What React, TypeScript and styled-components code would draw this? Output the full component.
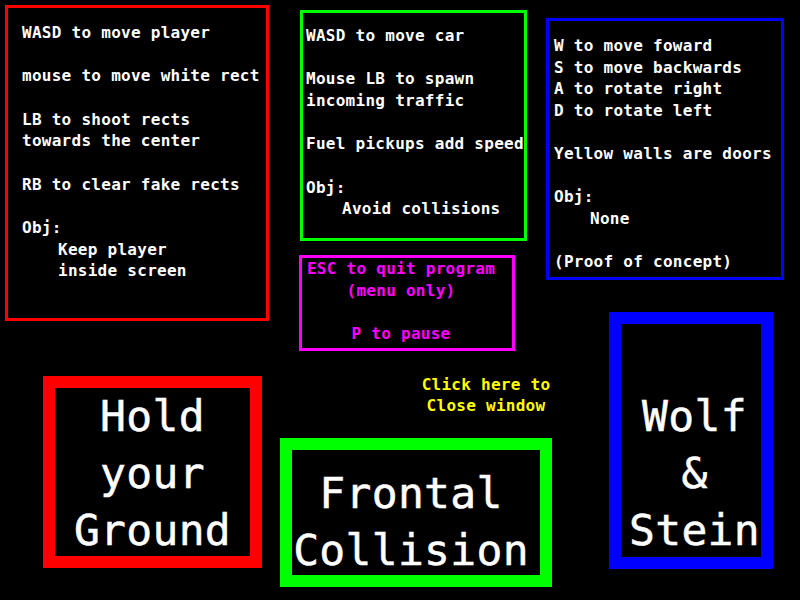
import React from "react";
import styled, { createGlobalStyle } from "styled-components";

const Global = createGlobalStyle`
  html, body { margin: 0; padding: 0; background: #000; }
  body { width: 800px; height: 600px; overflow: hidden; }
`;

const Canvas = styled.div`
  position: relative;
  width: 800px;
  height: 600px;
  background: #000;
  overflow: hidden;
  font-family: "DejaVu Sans Mono", "Liberation Mono", monospace;
`;

type BoxProps = {
  $x: number;
  $y: number;
  $w: number;
  $h: number;
  $color: string;
  $border: number;
  $pt?: number;
  $pl?: number;
  $pr?: number;
};

const Panel = styled.div<BoxProps>`
  position: absolute;
  left: ${(p) => p.$x}px;
  top: ${(p) => p.$y}px;
  width: ${(p) => p.$w}px;
  height: ${(p) => p.$h}px;
  box-sizing: border-box;
  border: ${(p) => p.$border}px solid ${(p) => p.$color};
  padding: ${(p) => p.$pt ?? 0}px ${(p) => p.$pr ?? 0}px 0 ${(p) => p.$pl ?? 0}px;
  display: flex;
  flex-direction: column;
`;

const Lines = styled.div<{ $color?: string; $center?: boolean }>`
  display: flex;
  flex-direction: column;
  align-items: ${(p) => (p.$center ? "center" : "flex-start")};
  color: ${(p) => p.$color ?? "#fff"};
  font-size: 16px;
  font-weight: bold;
  letter-spacing: 0.27px;
  line-height: 21.65px;
  white-space: pre;
`;

const Line = styled.div<{ $indent?: boolean }>`
  height: 21.65px;
  padding-left: ${(p) => (p.$indent ? 36 : 0)}px;
`;

const Title = styled.div`
  display: flex;
  flex-direction: column;
  align-items: center;
  color: #fff;
  font-size: 43px;
  font-weight: normal;
  letter-spacing: 0.3px;
  line-height: 57px;
  white-space: nowrap;
  -webkit-text-stroke: 0.5px #fff;
`;

const CloseLink = styled.div`
  position: absolute;
  left: 411px;
  top: 373.5px;
  width: 150px;
  cursor: pointer;
`;

type L = { t: string; i?: boolean };

const renderLines = (lines: L[]) =>
  lines.map((l, k) => (
    <Line key={k} $indent={l.i}>
      {l.t || " "}
    </Line>
  ));

const holdLines: L[] = [
  { t: "WASD to move player" },
  { t: "" },
  { t: "mouse to move white rect" },
  { t: "" },
  { t: "LB to shoot rects" },
  { t: "towards the center" },
  { t: "" },
  { t: "RB to clear fake rects" },
  { t: "" },
  { t: "Obj:" },
  { t: "Keep player", i: true },
  { t: "inside screen", i: true },
];

const carLines: L[] = [
  { t: "WASD to move car" },
  { t: "" },
  { t: "Mouse LB to spawn" },
  { t: "incoming traffic" },
  { t: "" },
  { t: "Fuel pickups add speed" },
  { t: "" },
  { t: "Obj:" },
  { t: "Avoid collisions", i: true },
];

const wolfLines: L[] = [
  { t: "W to move foward" },
  { t: "S to move backwards" },
  { t: "A to rotate right" },
  { t: "D to rotate left" },
  { t: "" },
  { t: "Yellow walls are doors" },
  { t: "" },
  { t: "Obj:" },
  { t: "None", i: true },
  { t: "" },
  { t: "(Proof of concept)" },
];

const quitLines: L[] = [
  { t: "ESC to quit program" },
  { t: "(menu only)" },
  { t: "" },
  { t: "P to pause" },
];

export default function App() {
  return (
    <>
      <Global />
      <Canvas>
        <Panel $x={5} $y={5} $w={264} $h={316} $color="#ff0000" $border={3} $pt={14.2} $pl={14}>
          <Lines>{renderLines(holdLines)}</Lines>
        </Panel>

        <Panel $x={300} $y={10} $w={227} $h={231} $color="#00ff00" $border={3} $pt={12.2} $pl={3}>
          <Lines>{renderLines(carLines)}</Lines>
        </Panel>

        <Panel $x={546} $y={18} $w={238} $h={262} $color="#0000ff" $border={3} $pt={14} $pl={5}>
          <Lines>{renderLines(wolfLines)}</Lines>
        </Panel>

        <Panel $x={299} $y={255} $w={216} $h={96} $color="#ff00ff" $border={3} $pt={0} $pr={12}>
          <Lines $color="#ff00ff" $center>
            {renderLines(quitLines)}
          </Lines>
        </Panel>

        <CloseLink>
          <Lines $color="#ffff00" $center>
            <Line>Click here to</Line>
            <Line>Close window</Line>
          </Lines>
        </CloseLink>

        <Panel $x={43} $y={376} $w={219} $h={192} $color="#ff0000" $border={12} $pt={0}>
          <Title>
            <div>Hold</div>
            <div>your</div>
            <div>Ground</div>
          </Title>
        </Panel>

        <Panel $x={280} $y={438} $w={272} $h={149} $color="#00ff00" $border={12} $pt={14.6} $pr={10}>
          <Title>
            <div>Frontal</div>
            <div>Collision</div>
          </Title>
        </Panel>

        <Panel $x={609} $y={312} $w={164} $h={257} $color="#0000ff" $border={12} $pt={64.3} $pl={7}>
          <Title>
            <div>Wolf</div>
            <div>&amp;</div>
            <div>Stein</div>
          </Title>
        </Panel>
      </Canvas>
    </>
  );
}
